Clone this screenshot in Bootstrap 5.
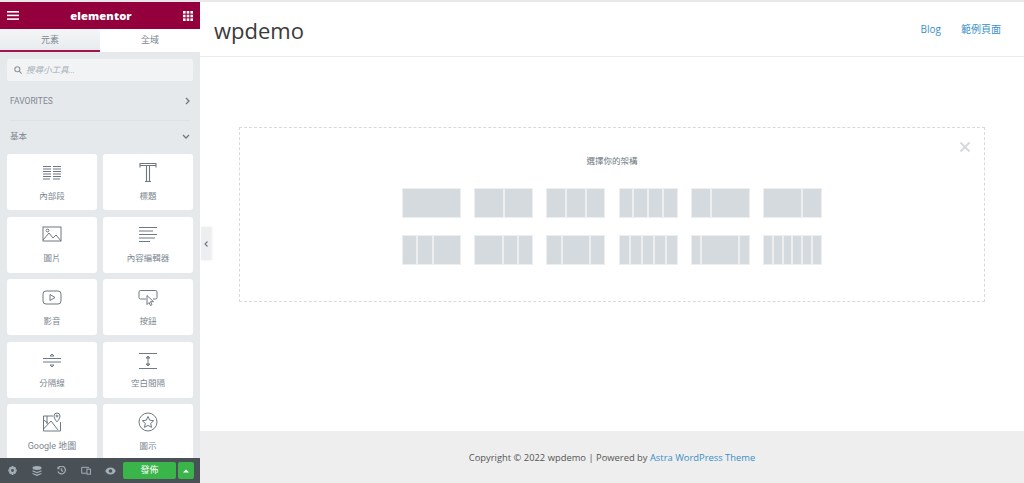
<!doctype html>
<html lang="zh-Hant"><head><meta charset="utf-8"><title>wpdemo</title>
<link href="https://cdn.jsdelivr.net/npm/bootstrap@5.3.0/dist/css/bootstrap.min.css" rel="stylesheet">
<style>
html,body{height:483px;overflow:hidden}
body{font-family:"Open Sans","Noto Sans CJK TC",sans-serif;background:#fff;color:#3a3a3a;padding-top:2px;box-shadow:inset 0 2px 0 #e8e8e8}
.app{height:481px}
.side{width:200px;background:#e6e9ec;font-family:Roboto,"Noto Sans CJK TC",sans-serif;color:#6d7882}
.sidehead{height:27px;background:#93003c;color:#fff;padding:0 7px}
.brand{font:800 11.2px/1 "Open Sans",sans-serif;letter-spacing:.1px}
.tabrow{height:23px;font-size:9px;color:#7d8790}
.tabitem{flex:1 1 0;background:#fff;line-height:22px;text-align:center}
.tabon{background:linear-gradient(#f3f5f6,#e9ecef);border-bottom:2px solid #a4134f}
.searchbox{margin:7px 7px 0;height:22px;background:#f1f3f5;border-radius:3px;padding-left:7px;font-size:8.5px;font-style:italic;color:#a4afb7}
.secthead{font-size:8.5px;padding:0 10px;color:#7d8790}
.sectfav{margin-top:12px;height:16px}
.sectrule{height:1px;background:#dfe2e5;margin:11px 10px 7px}
.sectbasic{height:16px;margin-bottom:10px}
.tilegrid{display:grid;grid-template-columns:90px 90px;gap:6.6px 6px;padding:0 7px;flex:1 1 0;overflow:hidden;align-content:start}
.widget{background:#fff;border-radius:3px;height:56px;font-size:8.5px;color:#7d8790;padding-top:8px}
.widget svg{display:block;height:22px;margin-bottom:5.5px}
.gmap{font-size:9px}
.toolbar{height:25px;background:#495157;flex:none}
.tool{width:24.6px;text-align:center;line-height:0}
.pub{width:53px;height:17px;background:#39b54a;border-radius:2px;color:#fff;font-size:9px}
.pubmore{width:16px;height:17px;background:#39b54a;border-radius:2px;margin-left:2px}
.toggle{position:absolute;left:201px;top:227px;width:10px;height:33px;background:#eceef0;box-shadow:1px 0 3px rgba(0,0,0,.08)}
.sitehead{height:55px;flex:none;border-bottom:1px solid #eaeaea;padding:0 23px 0 14px}
.sitetitle{font-size:22px;line-height:1;color:#3a3a3a;padding-top:2px}
.sitelink{font-size:10px;color:#3a8fc8;text-decoration:none}
.links{gap:20px;padding-top:1px}
.stage{flex:1 1 0;padding:70px 39px 0 39px}
.dropzone{height:175px;border:1px dashed #d5dadf;padding-top:27px;position:relative}
.closeglyph{position:absolute;right:14px;top:14px;line-height:0}
.picktitle{font-size:8.5px;line-height:12px;color:#6d7882;font-family:Roboto,"Noto Sans CJK TC",sans-serif;margin-bottom:21px}
.presets{display:grid;grid-template-columns:repeat(6,59px);gap:17px 13.2px;justify-content:center}
.preset{height:30px;display:flex}
.preset i{display:block;background:#d5dadf;border:1px solid #eceef0}
.sitefoot{height:52px;flex:none;background:#eee;font-size:9.4px;color:#555;padding-top:2px}
.sitefoot a{color:#3a8fc8;text-decoration:none}
</style></head><body>
<div class="app d-flex">
<aside class="side d-flex flex-column flex-shrink-0">
 <div class="sidehead d-flex align-items-center justify-content-between">
  <svg width="12" height="9" viewBox="0 0 12 9" fill="#fff"><rect width="12" height="1.6"/><rect y="3.6" width="12" height="1.6"/><rect y="7.3" width="12" height="1.6"/></svg>
  <span class="brand">elementor</span>
  <svg width="10" height="10" viewBox="0 0 10 10" fill="#fff"><rect width="2.6" height="2.6"/><rect x="3.7" width="2.6" height="2.6"/><rect x="7.4" width="2.6" height="2.6"/><rect y="3.7" width="2.6" height="2.6"/><rect x="3.7" y="3.7" width="2.6" height="2.6"/><rect x="7.4" y="3.7" width="2.6" height="2.6"/><rect y="7.4" width="2.6" height="2.6"/><rect x="3.7" y="7.4" width="2.6" height="2.6"/><rect x="7.4" y="7.4" width="2.6" height="2.6"/></svg>
 </div>
 <div class="tabrow d-flex"><div class="tabitem tabon">元素</div><div class="tabitem">全域</div></div>
 <div class="searchbox d-flex align-items-center gap-1">
  <svg width="8" height="8" viewBox="0 0 8 8" fill="none" stroke="#8b949c" stroke-width="1.1"><circle cx="3.3" cy="3.3" r="2.5"/><path d="M5.2 5.2 7.6 7.6"/></svg><span>搜尋小工具...</span>
 </div>
 <div class="secthead sectfav d-flex align-items-center justify-content-between"><span>FAVORITES</span>
  <svg width="5" height="8" viewBox="0 0 5 8" fill="none" stroke="#6d7882" stroke-width="1.3"><path d="M1 1l3 3-3 3"/></svg></div>
 <div class="sectrule"></div>
 <div class="secthead sectbasic d-flex align-items-center justify-content-between"><span>基本</span>
  <svg width="8" height="5" viewBox="0 0 8 5" fill="none" stroke="#6d7882" stroke-width="1.3"><path d="M1 1l3 3 3-3"/></svg></div>
 <div class="tilegrid">
  <div class="widget text-center"><svg class="mx-auto" width="20" viewBox="0 0 20 22" stroke="#6d7882" stroke-width="1.2" fill="none"><path d="M1 4.500h8M11 4.500h8M1 7h8M11 7h8M1 9.500h8M11 9.500h8M1 12h8M11 12h8M1 14.500h8M11 14.500h8M1 17h7M11 17h7"/></svg>內部段</div>
  <div class="widget text-center"><svg class="mx-auto" width="18" viewBox="0 0 18 22" stroke="#6d7882" stroke-width="1.1" fill="none"><path d="M1 5.500V1.500h16v4M1 3.500h16M7.500 3.500v15.500M10.500 3.500v15.500M6 19.500h6"/></svg>標題</div>
  <div class="widget text-center"><svg class="mx-auto" width="20" viewBox="0 0 20 22" stroke="#6d7882" stroke-width="1" fill="none"><rect x="1" y="2" width="18" height="14"/><circle cx="5.500" cy="5.500" r="1.400"/><path d="M1 15l6-7 4 5 3-3 5 6"/></svg>圖片</div>
  <div class="widget text-center"><svg class="mx-auto" width="20" viewBox="0 0 20 22" stroke="#6d7882" stroke-width="1" fill="none"><path d="M1 2.500h18M1 6h14M1 9.500h18M1 13h16M1 16.500h11"/></svg>內容編輯器</div>
  <div class="widget text-center"><svg class="mx-auto" width="20" viewBox="0 0 20 22" stroke="#6d7882" stroke-width="1" fill="none"><rect x="1" y="4" width="18" height="13" rx="3"/><path d="M8 7.500v6l5-3z"/></svg>影音</div>
  <div class="widget text-center"><svg class="mx-auto" width="20" viewBox="0 0 20 22" stroke="#6d7882" stroke-width="1" fill="none"><path d="M8 12H2.500A1.500 1.500 0 0 1 1 10.500V5a1.500 1.500 0 0 1 1.500-1.500h15A1.500 1.500 0 0 1 19 5v5.500a1.500 1.500 0 0 1-1.500 1.500H15"/><path d="M9 8.500v9l2-2 1.500 3 1.500-.8-1.500-3h3z" fill="#fff"/></svg>按鈕</div>
  <div class="widget text-center"><svg class="mx-auto" width="20" viewBox="0 0 20 22" stroke="#6d7882" stroke-width="1" fill="none"><path d="M1 8.500h18M1 12h18M8 6l2-2 2 2zM8 15l2 2 2-2z"/></svg>分隔線</div>
  <div class="widget text-center"><svg class="mx-auto" width="20" viewBox="0 0 20 22" stroke="#6d7882" stroke-width="1" fill="none"><path d="M1 3.500h18M1 18.500h18M10 6v10M8 8l2-2 2 2zM8 14l2 2 2-2z"/></svg>空白間隔</div>
  <div class="widget text-center gmap"><svg class="mx-auto" width="20" viewBox="0 0 20 22" stroke="#6d7882" stroke-width="1" fill="none"><path d="M11 4H1.500v15h17V10M1.500 17 9 9l7 9M5 4v8M1.500 8 6 11"/><path d="M15 10s-3-3.500-3-6a3 3 0 0 1 6 0c0 2.500-3 6-3 6z" fill="#fff"/><circle cx="15" cy="4" r="1"/></svg>Google 地圖</div>
  <div class="widget text-center"><svg class="mx-auto" width="20" viewBox="0 0 20 22" stroke="#6d7882" stroke-width="1" fill="none"><circle cx="10" cy="10" r="9"/><path d="M10 4.500l1.700 3.700 4 .5-3 2.700.8 4L10 13.400l-3.500 2 .8-4-3-2.700 4-.5z"/></svg>圖示</div>
 </div>
 <div class="toolbar d-flex align-items-center">
  <span class="tool"><svg width="9" height="9" viewBox="0 0 10 10" fill="#a4afb7"><path d="M4 0h2l.3 1.500 1.300-.7 1.400 1.400-.8 1.300L9.700 4v2l-1.500.3.800 1.300L7.600 9l-1.300-.8L6 10H4l-.3-1.700-1.300.8L1 7.600l.8-1.300L.3 6V4l1.500-.5L1 2.200 2.400.8l1.300.7z"/><circle cx="5" cy="5" r="1.600" fill="#495157"/></svg></span>
  <span class="tool"><svg width="10" height="10" viewBox="0 0 10 10" fill="#a4afb7"><ellipse cx="5" cy="2" rx="4.500" ry="1.900"/><path d="M.5 4.200 5 6l4.500-1.800v1.300L5 7.300.5 5.500zM.5 7 5 8.600 9.500 7v1L5 10 .5 8z"/></svg></span>
  <span class="tool"><svg width="9" height="9" viewBox="0 0 10 10" fill="none" stroke="#a4afb7" stroke-width="1.400"><path d="M1.500 2A4.300 4.300 0 1 1 1 6M5 2.500V5l1.800 1.200"/><path d="M.5.500v3h3z" fill="#a4afb7" stroke="none"/></svg></span>
  <span class="tool"><svg width="10" height="9" viewBox="0 0 11 9" fill="none" stroke="#a4afb7" stroke-width="1.100"><path d="M6 7.500H.8V1h7.500v1"/><rect x="6.500" y="3" width="4" height="5.500"/></svg></span>
  <span class="tool"><svg width="11" height="8" viewBox="0 0 11 8" fill="#a4afb7"><path d="M.2 4C1.500 1.500 3.300.5 5.500.5S9.500 1.500 10.800 4C9.500 6.500 7.700 7.500 5.500 7.500S1.500 6.500.2 4z"/><circle cx="5.500" cy="4" r="1.800" fill="#495157"/></svg></span>
  <span class="pub d-flex align-items-center justify-content-center">發佈</span>
  <span class="pubmore d-flex align-items-center justify-content-center"><svg width="6" height="4" viewBox="0 0 6 4" fill="#fff"><path d="M0 3.500 3 .5l3 3z"/></svg></span>
 </div>
</aside>
<main class="flex-grow-1 d-flex flex-column">
 <header class="sitehead d-flex align-items-center justify-content-between">
  <div class="sitetitle">wpdemo</div>
  <nav class="links d-flex"><a class="sitelink" href="#">Blog</a><a class="sitelink" href="#">範例頁面</a></nav>
 </header>
 <section class="stage">
  <div class="dropzone text-center">
   <span class="closeglyph"><svg width="10" height="10" viewBox="0 0 10 10" stroke="#d5dadf" stroke-width="2"><path d="M.5.500l9 9M9.500.500l-9 9"/></svg></span>
   <div class="picktitle">選擇你的架構</div>
   <div class="presets">
    <div class="preset"><i style="flex:100"></i></div>
    <div class="preset"><i style="flex:50"></i><i style="flex:50"></i></div>
    <div class="preset"><i style="flex:33"></i><i style="flex:33"></i><i style="flex:33"></i></div>
    <div class="preset"><i style="flex:25"></i><i style="flex:25"></i><i style="flex:25"></i><i style="flex:25"></i></div>
    <div class="preset"><i style="flex:33"></i><i style="flex:67"></i></div>
    <div class="preset"><i style="flex:66"></i><i style="flex:33"></i></div>
    <div class="preset"><i style="flex:25"></i><i style="flex:25"></i><i style="flex:50"></i></div>
    <div class="preset"><i style="flex:50"></i><i style="flex:25"></i><i style="flex:25"></i></div>
    <div class="preset"><i style="flex:25"></i><i style="flex:50"></i><i style="flex:25"></i></div>
    <div class="preset"><i style="flex:20"></i><i style="flex:20"></i><i style="flex:20"></i><i style="flex:20"></i><i style="flex:20"></i></div>
    <div class="preset"><i style="flex:16"></i><i style="flex:67"></i><i style="flex:16"></i></div>
    <div class="preset"><i style="flex:16"></i><i style="flex:16"></i><i style="flex:16"></i><i style="flex:16"></i><i style="flex:16"></i><i style="flex:16"></i></div>
   </div>
  </div>
 </section>
 <footer class="sitefoot d-flex align-items-center justify-content-center"><span>Copyright © 2022 wpdemo | Powered by <a href="#">Astra WordPress Theme</a></span></footer>
</main>
</div>
<div class="toggle d-flex align-items-center justify-content-center"><svg width="4" height="6" viewBox="0 0 4 6" fill="none" stroke="#6d7882" stroke-width="1.100"><path d="M3.500.500 1 3l2.500 2.500"/></svg></div>
</body></html>
